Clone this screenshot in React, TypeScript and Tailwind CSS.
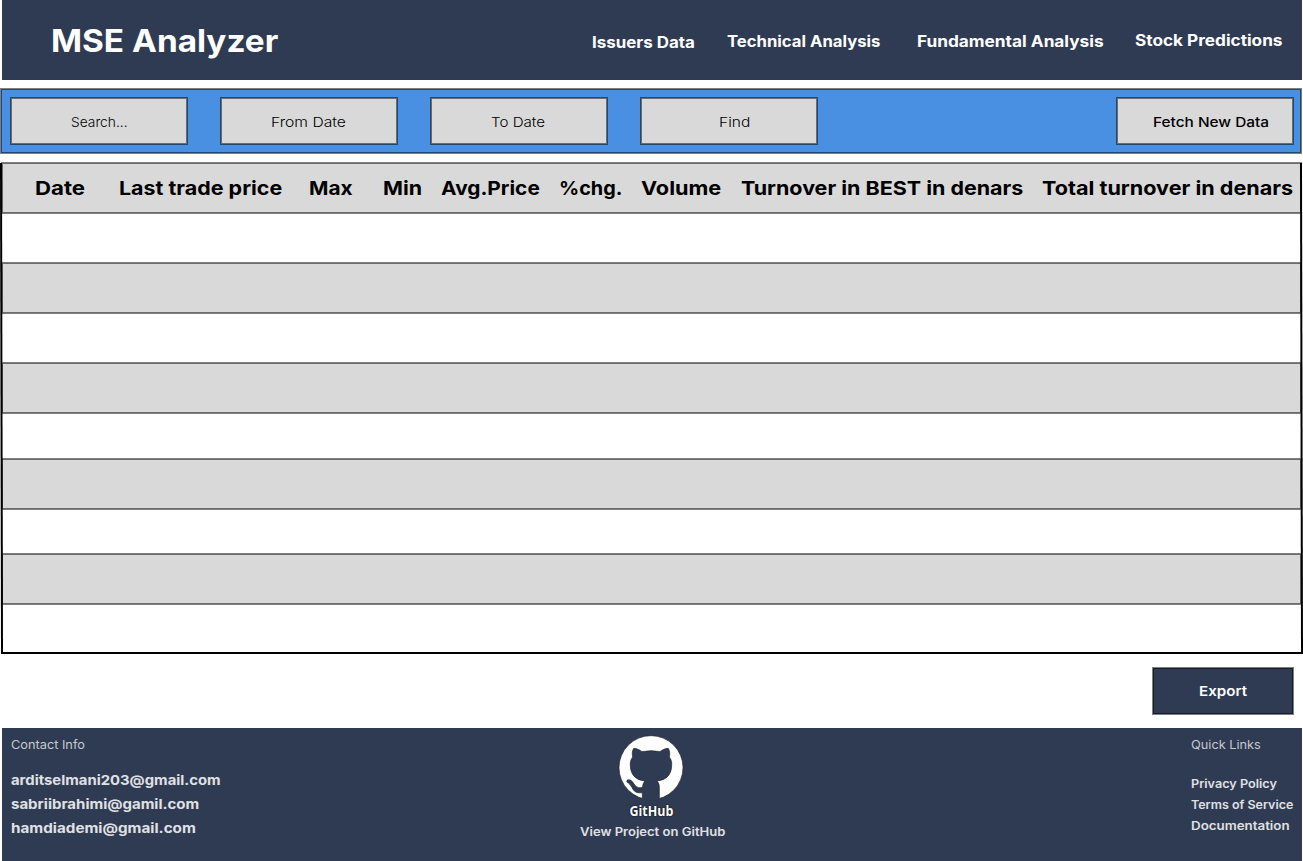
const outline =
  "shadow-[0_0_0_1px_rgba(0,0,0,0.5),inset_0_0_0_1px_rgba(0,0,0,0.5)]";

const columns = [
  { label: "Date", stretch: "scale-x-[1.15]" },
  { label: "Last trade price", stretch: "scale-x-[1.112]" },
  { label: "Max", stretch: "scale-x-[1.08]" },
  { label: "Min", stretch: "scale-x-[1.11]" },
  { label: "Avg.Price", stretch: "scale-x-[1.08]" },
  { label: "%chg.", stretch: "scale-x-[1.03]" },
  { label: "Volume", stretch: "scale-x-[1.125]" },
  { label: "Turnover in BEST in denars", stretch: "scale-x-[1.113]" },
  { label: "Total turnover in denars", stretch: "scale-x-[1.12]" },
];

const rows = [
  "h-[50px]",
  `h-[50px] bg-[#d9d9d9] ${outline}`,
  "h-[50px]",
  `h-[50px] bg-[#d9d9d9] ${outline}`,
  "h-[46px]",
  `h-[50px] bg-[#d9d9d9] ${outline}`,
  "h-[45px]",
  `h-[50px] bg-[#d9d9d9] ${outline}`,
  "h-[50px] border-b-2 border-black",
];

function Wide({ text, stretch }: { text: string; stretch: string }) {
  return <span className={`inline-block origin-left whitespace-nowrap ${stretch}`}>{text}</span>;
}

function Field({ label, stretch, className }: { label: string; stretch: string; className: string }) {
  return (
    <button
      className={`flex h-[46px] w-44 items-center bg-[#d9d9d9] pt-0.5 text-[13.5px] ${outline} ${className}`}
    >
      <Wide text={label} stretch={stretch} />
    </button>
  );
}

function GitHubMark() {
  return (
    <svg viewBox="24 16 198 198" className="size-[66px]" aria-hidden="true">
      <circle cx="123" cy="114" r="96" fill="#fff" stroke="#1d2533" strokeWidth="2" />
      <path
        fill="#2f3b52"
        d="M71 56C80 56 88 60 96 66Q123 60 150 66C158 60 166 56 175 56C180 65 180 74 178 82C184 90 186 98 185 108C184 137 168 151 141 154C146 159 148 165 148 174V213H97V189C77 192 71 183 66 174C62 166 57 161 51 157C48 151 56 149 62 152C72 157 74 172 86 174C91 175 95 174 98 172C98 164 101 158 105 154C78 151 62 137 61 108C60 98 62 90 68 82C66 74 66 65 71 56Z"
      />
      <path
        fill="none"
        stroke="#1d2533"
        strokeWidth="2"
        d="M97 206V189C77 192 71 183 66 174C62 166 57 161 51 157C48 151 56 149 62 152C72 157 74 172 86 174C91 175 95 174 98 172C98 164 101 158 105 154C78 151 62 137 61 108C60 98 62 90 68 82C66 74 66 65 71 56C80 56 88 60 96 66Q123 60 150 66C158 60 166 56 175 56C180 65 180 74 178 82C184 90 186 98 185 108C184 137 168 151 141 154C146 159 148 165 148 174V206"
      />
    </svg>
  );
}

export default function App() {
  return (
    <div className="h-[861px] w-[1303px] overflow-hidden bg-white font-['Inter',sans-serif] text-black">
      <header className="ml-0.5 flex h-20 w-[1300px] items-center bg-[#2f3b52] whitespace-nowrap text-white">
        <h1 className="ml-[49px] w-[541px] pt-[3px] text-[31px] font-bold">
          <Wide text="MSE Analyzer" stretch="scale-x-[1.075]" />
        </h1>
        <nav className="flex items-center text-[15.4px] font-[650]">
          <a className="w-[135px] pt-1.5">
            <Wide text="Issuers Data" stretch="scale-x-[1.1]" />
          </a>
          <a className="w-[190px] pt-1">
            <Wide text="Technical Analysis" stretch="scale-x-[1.083]" />
          </a>
          <a className="w-[218px] pt-1">
            <Wide text="Fundamental Analysis" stretch="scale-x-[1.12]" />
          </a>
          <a className="pt-0.5">
            <Wide text="Stock Predictions" stretch="scale-x-[1.117]" />
          </a>
        </nav>
      </header>

      <section className={`mt-[9px] ml-px flex h-16 w-[1300px] items-center bg-[#4a90e2] pl-2.5 ${outline}`}>
        <Field label="Search..." stretch="scale-x-[1.02]" className="pl-[60px] font-[350]" />
        <Field label="From Date" stretch="scale-x-[1.16]" className="ml-[34px] pl-[50px] font-[350]" />
        <Field label="To Date" stretch="scale-x-[1.12]" className="ml-[34px] pl-[60px] font-[350]" />
        <Field label="Find" stretch="scale-x-[1.15]" className="ml-[34px] pl-[78px] font-[350]" />
        <Field label="Fetch New Data" stretch="scale-x-[1.14]" className="ml-[300px] pl-[36px] font-[550]" />
      </section>

      <main className="relative mt-2.5 ml-0.5 w-[1299px]">
        <div
          className={`grid h-[50px] grid-cols-[84px_190px_74px_58px_118px_82px_100px_301px_1fr] items-center bg-[#d9d9d9] pl-[32.5px] text-[19.3px] font-[680] ${outline}`}
        >
          {columns.map((column) => (
            <div key={column.label}>
              <Wide text={column.label} stretch={column.stretch} />
            </div>
          ))}
        </div>
        {rows.map((row, index) => (
          <div key={index} className={row} />
        ))}
        <div className="absolute top-0 -left-0.5 h-[491px] w-0.5 translate-x-[0.5px] rotate-[-0.117deg] bg-black" />
        <div className="absolute top-0 -right-px h-[491px] w-0.5 translate-x-[0.5px] rotate-[-0.117deg] bg-black" />
      </main>

      <div className="mt-3.5 flex justify-end pr-[10px]">
        <button
          className={`flex h-[46px] w-[140px] items-center bg-[#2f3b52] pl-[46px] text-[13.5px] font-semibold text-white ${outline}`}
        >
          <Wide text="Export" stretch="scale-x-[1.12]" />
        </button>
      </div>

      <footer className="mt-3.5 ml-0.5 flex h-[133px] w-[1300px] bg-[#2f3b52] text-[#e0e1e4]">
        <section className="w-[566px] pt-2 pl-[9px]">
          <h2 className="text-[11.6px] leading-[18px] text-[#c6c9cf]">
            <Wide text="Contact Info" stretch="scale-x-[1.1]" />
          </h2>
          <ul className="mt-3.5 text-[13.5px] leading-6 font-[650]">
            <li>
              <Wide text="arditselmani203@gmail.com" stretch="scale-x-[1.1]" />
            </li>
            <li>
              <Wide text="sabriibrahimi@gamil.com" stretch="scale-x-[1.112]" />
            </li>
            <li>
              <Wide text="hamdiademi@gmail.com" stretch="scale-x-[1.128]" />
            </li>
          </ul>
        </section>
        <section className="flex w-[166px] flex-col items-center pt-[7px]">
          <GitHubMark />
          <span className="mt-px scale-x-[0.83] font-['Open_Sans'] text-[15px] leading-4 font-bold text-white [text-shadow:0_0_2px_#000]">
            GitHub
          </span>
          <a className="mt-[5px] w-[142px] text-[11.6px] leading-[18px] font-[580]">
            <Wide text="View Project on GitHub" stretch="scale-x-[1.125]" />
          </a>
        </section>
        <section className="pt-2 pl-[457px] text-[11.6px]">
          <h2 className="leading-[18px] text-[#c6c9cf]">
            <Wide text="Quick Links" stretch="scale-x-[1.1]" />
          </h2>
          <ul className="mt-5 leading-[21px] font-[580]">
            <li>
              <Wide text="Privacy Policy" stretch="scale-x-[1.09]" />
            </li>
            <li>
              <Wide text="Terms of Service" stretch="scale-x-[1.075]" />
            </li>
            <li>
              <Wide text="Documentation" stretch="scale-x-[1.15]" />
            </li>
          </ul>
        </section>
      </footer>
    </div>
  );
}
